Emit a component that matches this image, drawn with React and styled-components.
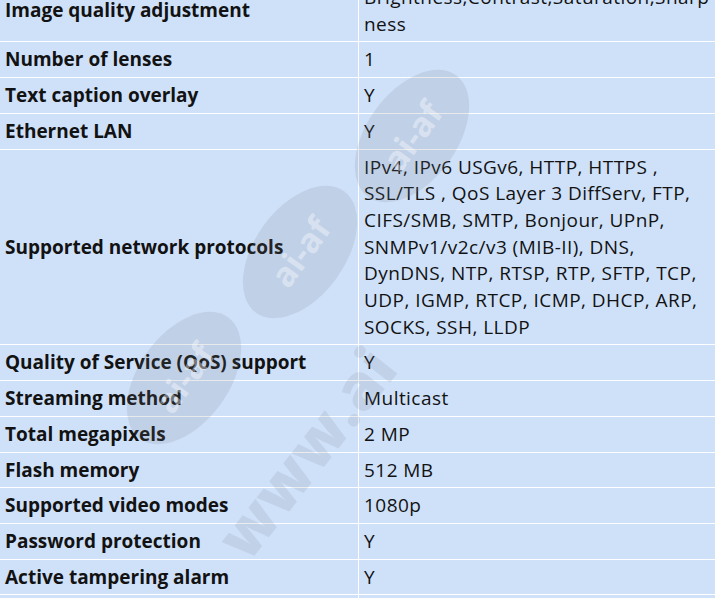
import styled, { createGlobalStyle } from "styled-components";

const GlobalStyle = createGlobalStyle`
  html, body {
    margin: 0;
    padding: 0;
    background: #ffffff;
    overflow: hidden;
  }
  body {
    font-family: "Open Sans", "Noto Sans", "Noto Sans CJK SC", sans-serif;
  }
`;

const Page = styled.div`
  position: relative;
  width: 715px;
  height: 598px;
  overflow: hidden;
`;

const SpecTable = styled.table`
  width: 100%;
  margin-top: -20px;
  border-collapse: collapse;
  table-layout: fixed;
  background-color: #cfe1f9;
`;

const Row = styled.tr`
  border-bottom: 1px solid #ffffff;
`;

const Cell = styled.td`
  padding: 4px 4px 4px 5px;
  font-size: 19px;
  line-height: 26.7px;
  color: #121212;
  vertical-align: middle;
  overflow-wrap: anywhere;
  font-weight: ${(p) => (p.label ? 700 : 400)};
  letter-spacing: ${(p) => (p.label ? "0" : "0.45px")};
  width: ${(p) => (p.label ? "349px" : "auto")};
  border-right: ${(p) => (p.label ? "1px solid #ffffff" : "none")};
`;

const Watermark = styled.div`
  position: absolute;
  inset: 0;
  pointer-events: none;
`;

const Oval = styled.div`
  position: absolute;
  width: 90px;
  height: 150px;
  border-radius: 50%;
  background: rgba(120, 125, 135, 0.16);
  transform: translate(-50%, -50%) rotate(36deg);
  display: flex;
  align-items: center;
  justify-content: center;
`;

const OvalText = styled.span`
  display: block;
  transform: rotate(-90deg);
  font-family: "Open Sans", sans-serif;
  font-weight: 700;
  font-size: 34px;
  color: rgba(255, 255, 255, 0.4);
  white-space: nowrap;
`;

const BigText = styled.span`
  position: absolute;
  left: 205px;
  top: 530px;
  transform-origin: 0 0;
  transform: rotate(-52deg);
  font-family: "Open Sans", sans-serif;
  font-weight: 800;
  font-size: 62px;
  line-height: 1;
  color: rgba(115, 120, 132, 0.14);
  white-space: nowrap;
`;

const specs = [
  ["Image quality adjustment", "Brightness,Contrast,Saturation,Sharpness"],
  ["Number of lenses", "1"],
  ["Text caption overlay", "Y"],
  ["Ethernet LAN", "Y"],
  [
    "Supported network protocols",
    "IPv4, IPv6 USGv6, HTTP, HTTPS , SSL/TLS , QoS Layer 3 DiffServ, FTP, CIFS/SMB, SMTP, Bonjour, UPnP, SNMPv1/v2c/v3 (MIB-II), DNS, DynDNS, NTP, RTSP, RTP, SFTP, TCP, UDP, IGMP, RTCP, ICMP, DHCP, ARP, SOCKS, SSH, LLDP",
  ],
  ["Quality of Service (QoS) support", "Y"],
  ["Streaming method", "Multicast"],
  ["Total megapixels", "2 MP"],
  ["Flash memory", "512 MB"],
  ["Supported video modes", "1080p"],
  ["Password protection", "Y"],
  ["Active tampering alarm", "Y"],
  ["Video recording", "Y"],
];

const ovals = [
  { x: 412, y: 136 },
  { x: 300, y: 252 },
  { x: 184, y: 378 },
];

export default function App() {
  return (
    <>
      <GlobalStyle />
      <Page>
        <SpecTable>
          <tbody>
            {specs.map(([label, value]) => (
              <Row key={label}>
                <Cell label>{label}</Cell>
                <Cell>{value}</Cell>
              </Row>
            ))}
          </tbody>
        </SpecTable>
        <Watermark>
          {ovals.map((o) => (
            <Oval key={o.x} style={{ left: o.x, top: o.y }}>
              <OvalText>ai-af</OvalText>
            </Oval>
          ))}
          <BigText>www.ai</BigText>
        </Watermark>
      </Page>
    </>
  );
}
